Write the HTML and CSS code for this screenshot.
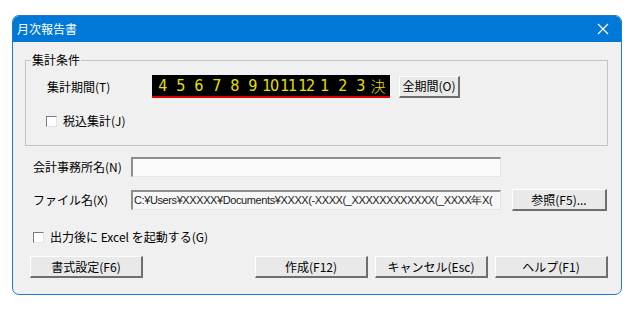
FILE: index.html
```html
<!DOCTYPE html>
<html lang="ja">
<head>
    <meta charset="UTF-8">
    <title>月次報告書</title>
    <link rel="stylesheet" href="styles.css">
</head>
<body>
    <div class="window">
        <div class="title-bar">
            <span class="title">月次報告書</span>
            <svg class="close" width="12" height="12" viewBox="0 0 12 12">
                <path d="M1 1 L11 11 M11 1 L1 11" stroke="#ffffff" stroke-width="1.2" fill="none"/>
            </svg>
        </div>
        <div class="dialog-body">
            <fieldset class="group">
                <legend>集計条件</legend>
                <div class="period-row">
                    <span class="label period-label">集計期間(T)</span>
                    <div class="months">
                        <span>4</span><span>5</span><span>6</span><span>7</span><span>8</span><span>9</span>
                        <span>10</span><span>11</span><span>12</span><span>1</span><span>2</span><span>3</span>
                        <span class="kanji">決</span>
                    </div>
                    <button class="btn small">全期間(O)</button>
                </div>
                <div class="check-row tax">
                    <span class="checkbox"></span>
                    <span class="label">税込集計(J)</span>
                </div>
            </fieldset>

            <div class="field-row first">
                <span class="label field-label">会計事務所名(N)</span>
                <div class="textbox"></div>
            </div>
            <div class="field-row">
                <span class="label field-label">ファイル名(X)</span>
                <div class="textbox readonly">C:¥Users¥XXXXX¥Documents¥XXXX(-XXXX(_XXXXXXXXXXXX(_XXXX年X(</div>
                <button class="btn browse">参照(F5)...</button>
            </div>

            <div class="check-row excel">
                <span class="checkbox"></span>
                <span class="label">出力後に Excel を起動する(G)</span>
            </div>

            <div class="button-row">
                <button class="btn">書式設定(F6)</button>
                <div class="spacer"></div>
                <button class="btn">作成(F12)</button>
                <button class="btn">キャンセル(Esc)</button>
                <button class="btn">ヘルプ(F1)</button>
            </div>
        </div>
    </div>
</body>
</html>
```

FILE: styles.css
```css
body {
    margin: 0;
    padding: 15px 0 0 12px;
    background-color: #ffffff;
    font-family: "Noto Sans CJK JP", "DejaVu Sans", sans-serif;
    font-size: 12px;
    color: #000000;
}
.window {
    width: 608px;
    height: 278px;
    border: 1px solid #1c7bd0;
    border-radius: 7px;
    background-color: #f0f0f0;
    overflow: hidden;
}
.title-bar {
    height: 26px;
    background-color: #0078d7;
    display: flex;
    align-items: center;
    justify-content: space-between;
    padding: 0 12px 0 4px;
}
.title {
    color: #ffffff;
    font-size: 12px;
    line-height: 14px;
}
.close {
    display: block;
}
.dialog-body {
    padding: 11px 13px 0 12px;
}
.label {
    line-height: 14px;
    white-space: nowrap;
}
.group {
    margin: 0;
    padding: 0 0 17px 0;
    border: 1px solid #c4c4c4;
    min-width: 0;
}
.group legend {
    margin-left: 5px;
    padding: 0 1px;
    line-height: 14px;
}
.period-row {
    display: flex;
    align-items: center;
    margin-top: 8px;
    padding-left: 21px;
}
.period-label {
    width: 105px;
}
.months {
    display: flex;
    width: 238px;
    height: 21px;
    background-color: #000000;
    border-bottom: 2px solid #e00000;
    font-family: "DejaVu Sans Condensed", "DejaVu Sans", sans-serif;
    font-size: 16px;
    line-height: 21px;
    color: #e6e000;
}
.months span {
    width: 18px;
    text-align: center;
    flex-shrink: 0;
    letter-spacing: -1.5px;
    font-weight: 300;
}
.months span:first-child {
    margin-left: 1px;
}
.months .kanji {
    font-family: "Noto Sans CJK JP", sans-serif;
    font-size: 15px;
    letter-spacing: 0;
}
.btn {
    height: 22px;
    padding: 0;
    font-family: "Noto Sans CJK JP", "DejaVu Sans", sans-serif;
    font-size: 12px;
    line-height: 14px;
    color: #000000;
    background-color: #e9e9e9;
    border-style: solid;
    border-width: 1px 2px 2px 1px;
    border-color: #ffffff #6e6e6e #6e6e6e #ffffff;
    width: 113px;
}
.btn.small {
    width: 61px;
    height: 22px;
    margin-left: 9px;
}
.check-row {
    display: flex;
    align-items: center;
    gap: 6px;
}
.check-row.tax {
    margin-top: 16px;
    padding-left: 20px;
}
.checkbox {
    width: 9px;
    height: 9px;
    background-color: #ffffff;
    border-style: solid;
    border-width: 1px;
    border-color: #7a7a7a #e3e3e3 #e3e3e3 #7a7a7a;
}
.field-row {
    display: flex;
    align-items: center;
    margin-top: 12px;
    padding-left: 8px;
}
.field-row.first {
    margin-top: 11px;
}
.field-label {
    width: 98px;
}
.textbox {
    width: 366px;
    height: 17px;
    background-color: #fbfbfb;
    border-style: solid;
    border-width: 2px 1px 1px 2px;
    border-color: #8e8e8e #e6e6e6 #e6e6e6 #8e8e8e;
    overflow: hidden;
    white-space: nowrap;
    font-family: "Liberation Sans", sans-serif;
    font-size: 11px;
    line-height: 17px;
    letter-spacing: -0.4px;
    padding-left: 1px;
    color: #222222;
}
.textbox.readonly {
    background-color: #f7f7f7;
}
.btn.browse {
    width: 95px;
    margin-left: 11px;
}
.check-row.excel {
    margin-top: 19px;
    padding-left: 8px;
}
.button-row {
    display: flex;
    margin-top: 12px;
    padding-left: 5px;
    gap: 7px;
}
.spacer {
    flex: 1;
}
```
